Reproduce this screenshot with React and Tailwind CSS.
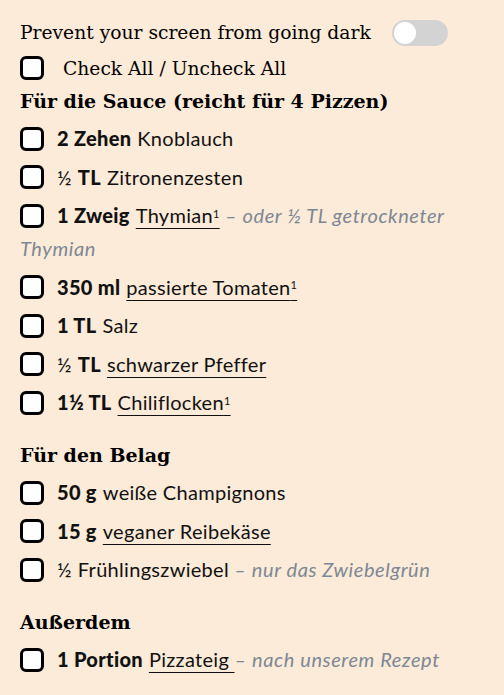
import React from "react";

const sections = [
  {
    title: "Für die Sauce (reicht für 4 Pizzen)",
    items: [
      { qty: "2 Zehen", name: "Knoblauch" },
      { frac: "½", qty: "TL", name: "Zitronenzesten" },
      { qty: "1 Zweig", link: "Thymian", sup: true, note: "oder ½ TL getrockneter Thymian" },
      { qty: "350 ml", link: "passierte Tomaten", sup: true },
      { qty: "1 TL", name: "Salz" },
      { frac: "½", qty: "TL", link: "schwarzer Pfeffer" },
      { qty: "1½ TL", link: "Chiliflocken", sup: true },
    ],
  },
  {
    title: "Für den Belag",
    items: [
      { qty: "50 g", name: "weiße Champignons" },
      { qty: "15 g", link: "veganer Reibekäse" },
      { frac: "½", name: "Frühlingszwiebel", note: "nur das Zwiebelgrün" },
    ],
  },
  {
    title: "Außerdem",
    items: [{ qty: "1 Portion", link: "Pizzateig ", note: "nach unserem Rezept" }],
  },
];

function Box({ className = "" }) {
  return (
    <span
      className={`inline-block w-[24px] h-[24px] shrink-0 rounded-[6px] border-[3px] border-black bg-white ${className}`}
    ></span>
  );
}

function Item({ it }) {
  return (
    <li className="leading-[33px] mb-[5.5px]">
      <Box className="align-middle relative -top-[2px] mr-[13px]" />
      {it.frac && <span className="mr-[6px]">{it.frac}</span>}
      {it.qty && <b className="font-black mr-[6px]">{it.qty}</b>}
      {it.name && <span>{it.name}</span>}
      {it.link && (
        <span className="underline decoration-1 underline-offset-[5px]">
          {it.link}
          {it.sup && <sup className="text-[11px]">1</sup>}
        </span>
      )}
      {it.note && (
        <span className="italic text-[#7d8794] tracking-[0.6px]"> – {it.note}</span>
      )}
    </li>
  );
}

export default function App() {
  return (
    <div className="min-h-[695px] bg-[#fcebd8] px-[20px] pt-[18px] text-black">
      <div className="flex items-center gap-[21px] font-['DejaVu_Serif',serif] text-[18.7px] leading-[30px]">
        <span>Prevent your screen from going dark</span>
        <span className="relative inline-block w-[56px] h-[26px] rounded-full bg-[#d3d3d3]">
          <span className="absolute left-[2px] top-[2px] w-[22px] h-[22px] rounded-full bg-white"></span>
        </span>
      </div>
      <label className="flex items-center gap-[19px] mt-[4px] font-['DejaVu_Serif',serif] text-[18.7px] leading-[28px]">
        <Box />
        <span className="mt-[3px]">Check All / Uncheck All</span>
      </label>
      <div className="font-['Lato',sans-serif] text-[20px] tracking-[0.3px] text-[#111]">
        {sections.map((s, i) => (
          <div key={i} className={i === 0 ? "mt-[3px]" : "mt-[21px]"}>
            <h3 className="font-['DejaVu_Serif',serif] font-bold text-[19px] tracking-normal leading-[30px] mb-[6px] text-black">
              {s.title}
            </h3>
            <ul>
              {s.items.map((it, j) => (
                <Item key={j} it={it} />
              ))}
            </ul>
          </div>
        ))}
      </div>
    </div>
  );
}
